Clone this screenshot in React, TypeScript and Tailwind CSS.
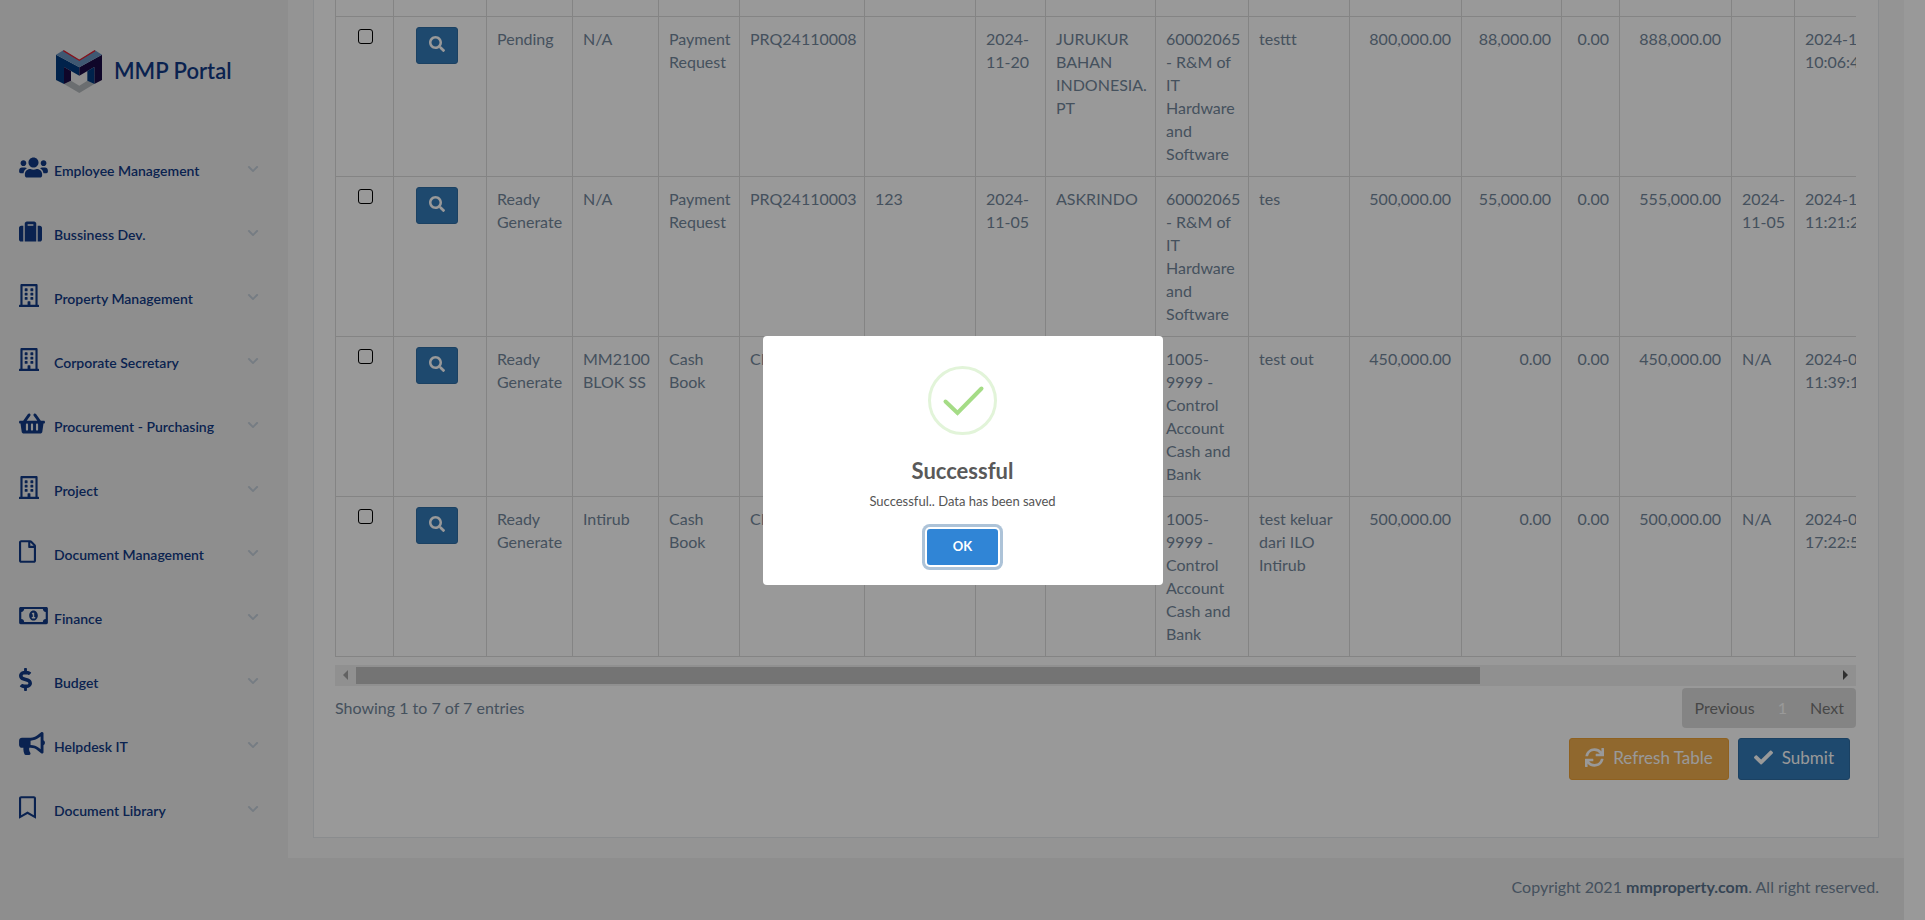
import type { ComponentType, ReactNode } from 'react';
import {
  FaUsers,
  FaSuitcase,
  FaRegBuilding,
  FaShoppingBasket,
  FaRegFile,
  FaRegMoneyBillAlt,
  FaDollarSign,
  FaBullhorn,
  FaRegBookmark,
  FaChevronDown,
  FaSearch,
  FaSync,
  FaCheck,
} from 'react-icons/fa';

type MenuItem = { label: string; icon: ComponentType<{ className?: string }>; size: string };

const menu: MenuItem[] = [
  { label: 'Employee Management', icon: FaUsers, size: 'w-[29px]' },
  { label: 'Bussiness Dev.', icon: FaSuitcase, size: 'w-[23px]' },
  { label: 'Property Management', icon: FaRegBuilding, size: 'w-5' },
  { label: 'Corporate Secretary', icon: FaRegBuilding, size: 'w-5' },
  { label: 'Procurement - Purchasing', icon: FaShoppingBasket, size: 'w-[26px]' },
  { label: 'Project', icon: FaRegBuilding, size: 'w-5' },
  { label: 'Document Management', icon: FaRegFile, size: 'w-[17px]' },
  { label: 'Finance', icon: FaRegMoneyBillAlt, size: 'w-[29px]' },
  { label: 'Budget', icon: FaDollarSign, size: 'w-[13px]' },
  { label: 'Helpdesk IT', icon: FaBullhorn, size: 'w-[26px]' },
  { label: 'Document Library', icon: FaRegBookmark, size: 'w-[17px]' },
];

type Row = {
  status: string;
  company: string;
  type: string;
  number: string;
  invoice: string;
  date: string;
  vendor: string;
  account: string;
  note: string;
  amount: string;
  vat: string;
  tax: string;
  total: string;
  due: string;
  created: string;
};

const rows: Row[] = [
  { status: 'Pending', company: 'N/A', type: 'Payment Request', number: 'PRQ24110008', invoice: '', date: '2024-11-20', vendor: 'JURUKUR BAHAN INDONESIA. PT', account: '60002065 - R&M of IT Hardware and Software', note: 'testtt', amount: '800,000.00', vat: '88,000.00', tax: '0.00', total: '888,000.00', due: '', created: '2024-11-20 10:06:41' },
  { status: 'Ready Generate', company: 'N/A', type: 'Payment Request', number: 'PRQ24110003', invoice: '123', date: '2024-11-05', vendor: 'ASKRINDO', account: '60002065 - R&M of IT Hardware and Software', note: 'tes', amount: '500,000.00', vat: '55,000.00', tax: '0.00', total: '555,000.00', due: '2024-11-05', created: '2024-11-05 11:21:20' },
  { status: 'Ready Generate', company: 'MM2100 BLOK SS', type: 'Cash Book', number: 'CB24090002', invoice: '', date: '2024-09-10', vendor: '', account: '1005-9999 - Control Account Cash and Bank', note: 'test out', amount: '450,000.00', vat: '0.00', tax: '0.00', total: '450,000.00', due: 'N/A', created: '2024-09-10 11:39:10' },
  { status: 'Ready Generate', company: 'Intirub', type: 'Cash Book', number: 'CB24090001', invoice: '', date: '2024-09-09', vendor: '', account: '1005-9999 - Control Account Cash and Bank', note: 'test keluar dari ILO Intirub', amount: '500,000.00', vat: '0.00', tax: '0.00', total: '500,000.00', due: 'N/A', created: '2024-09-09 17:22:50' },
];

const columnWidths = [58, 93, 86, 86, 81, 125, 111, 70, 110, 93, 101, 112, 100, 58, 112, 63, 120, 424];

function Logo() {
  return (
    <svg viewBox="0 0 138 129" className="h-[43px] w-[46px]" aria-hidden="true">
      <path d="M24 102 45 92 70 107 94 92 115 102 70 129Z" fill="#b3b8bb" />
      <path d="M0 14 70 52V77L24 51V102L0 90Z" fill="#003a7d" />
      <path d="M24 51 45 63V92L24 102Z" fill="#1a0a45" />
      <path d="M138 14 70 52V77L115 51V102L138 90Z" fill="#1a0a45" />
      <path d="M115 51 94 63V92L115 102Z" fill="#003a7d" />
      <path d="M0 14 22 1 70 31 117 1 138 14 70 52Z" fill="#6a93bf" />
      <path d="M22 2 70 31 117 2" fill="none" stroke="#e02030" strokeWidth="4" />
    </svg>
  );
}

function Sidebar() {
  return (
    <aside className="w-72 shrink-0 bg-[#ededed] text-[#113a85]">
      <a href="#home" className="flex h-[135px] items-center gap-3 pl-14 pt-2 text-[22px]">
        <Logo />
        <span className="pb-[2px] font-semibold">MMP Portal</span>
      </a>
      <nav aria-label="Main menu">
        <ul>
          {menu.map(({ label, icon: Icon, size }) => (
            <li key={label}>
              <a href="#menu" className="flex h-16 items-center pl-[19px] pr-[29px]">
                <span className="flex w-[35px] shrink-0">
                  <Icon className={`h-[23px] ${size}`} />
                </span>
                <span className="flex-1 whitespace-nowrap pt-2 text-sm font-semibold leading-5">{label}</span>
                <FaChevronDown className="mt-1 h-3 w-3 text-[#c4cfda]" />
              </a>
            </li>
          ))}
        </ul>
      </nav>
    </aside>
  );
}

function Cell({ children, numeric = false }: { children?: ReactNode; numeric?: boolean }) {
  return (
    <td className={`border border-[#ddd] py-[10px] pl-[10px] align-top ${numeric ? 'pr-[10px] text-right' : 'pr-[8px]'}`}>
      {children}
    </td>
  );
}

function EntriesTable() {
  return (
    <div className="overflow-x-hidden">
      <table className="w-[2003px] table-fixed border-collapse text-base leading-[23px]">
        <colgroup>
          {columnWidths.map((width, i) => (
            <col key={i} style={{ width }} />
          ))}
        </colgroup>
        <tbody>
          <tr className="h-4">
            {columnWidths.map((_, i) => (
              <td key={i} className="border border-t-0 border-[#ddd]" />
            ))}
          </tr>
          {rows.map((row) => (
            <tr key={row.number} className="h-40">
              <Cell>
                <input
                  type="checkbox"
                  aria-label={`Select ${row.number}`}
                  className="mx-auto mt-[2px] block size-[15px] appearance-none rounded-[3px] border border-black"
                />
              </Cell>
              <Cell>
                <button
                  type="button"
                  aria-label={`View ${row.number}`}
                  className="ml-3 flex h-[37px] w-[42px] items-center justify-center rounded-[3px] border border-[#2e6da4] bg-[#337ab7] pb-[2px] text-white"
                >
                  <FaSearch className="size-4" />
                </button>
              </Cell>
              <Cell>{row.status}</Cell>
              <Cell>{row.company}</Cell>
              <Cell>{row.type}</Cell>
              <Cell>{row.number}</Cell>
              <Cell>{row.invoice}</Cell>
              <Cell>{row.date}</Cell>
              <Cell>{row.vendor}</Cell>
              <Cell>{row.account}</Cell>
              <Cell>{row.note}</Cell>
              <Cell numeric>{row.amount}</Cell>
              <Cell numeric>{row.vat}</Cell>
              <Cell numeric>{row.tax}</Cell>
              <Cell numeric>{row.total}</Cell>
              <Cell>{row.due}</Cell>
              <Cell>{row.created}</Cell>
              <Cell />
            </tr>
          ))}
        </tbody>
      </table>
    </div>
  );
}

function ScrollTrack() {
  return (
    <div className="mt-2 flex h-[21px] items-center bg-[#f1f1f1]">
      <button type="button" aria-label="Scroll left" className="flex w-[21px] justify-center">
        <svg viewBox="0 0 5 10" className="h-[10px] w-[5px]" aria-hidden="true">
          <path d="M5 0V10L0 5Z" fill="#a3a3a3" />
        </svg>
      </button>
      <div className="flex-1">
        <div className="h-[17px] w-[76%] bg-[#c1c1c1]" />
      </div>
      <button type="button" aria-label="Scroll right" className="flex w-[21px] justify-center">
        <svg viewBox="0 0 5 10" className="h-[10px] w-[5px]" aria-hidden="true">
          <path d="M0 0V10L5 5Z" fill="#505050" />
        </svg>
      </button>
    </div>
  );
}

function SuccessDialog() {
  return (
    <div className="fixed inset-0 flex items-center justify-center bg-black/40">
      <div
        role="dialog"
        aria-modal="true"
        aria-labelledby="dialog-title"
        className="flex w-[400px] flex-col items-center rounded bg-white pb-5 pt-[30px] text-[#545454]"
      >
        <svg viewBox="0 0 69 69" className="size-[69px]" fill="none" aria-hidden="true">
          <circle cx="34.5" cy="34.5" r="33" stroke="#e2f4d9" strokeWidth="3" />
          <path d="M17.5 35.5 29.5 47 53.5 22.5" stroke="#a5dc86" strokeWidth="4" strokeLinecap="round" />
        </svg>
        <h2 id="dialog-title" className="mt-5 text-[22px] font-bold leading-8 text-[#595959]">
          Successful
        </h2>
        <p className="mt-1 text-[13px] leading-5">Successful.. Data has been saved</p>
        <button
          type="button"
          className="mt-[18px] h-9 w-[71px] rounded-[3px] bg-[#3085d6] text-[13px] font-bold text-white ring-3 ring-[#adc3d8] ring-offset-2 ring-offset-white"
        >
          OK
        </button>
      </div>
    </div>
  );
}

export default function App() {
  return (
    <div className="flex min-h-screen bg-white pr-[21px] font-[Lato,sans-serif] text-base text-[#73879c]">
      <Sidebar />
      <div className="flex min-w-0 flex-1 flex-col bg-[#f7f7f7]">
        <main className="px-[25px] pb-5">
          <section className="border border-t-0 border-[#e6e9ed] bg-white pb-[57px] pl-[21px] pr-[22px]">
            <EntriesTable />
            <ScrollTrack />
            <div className="mt-[2px] flex items-start justify-between">
              <p className="pt-2 leading-6">Showing 1 to 7 of 7 entries</p>
              <div className="flex h-10 items-center rounded bg-[#ddd] text-[#777]">
                <button type="button" className="px-3">Previous</button>
                <button type="button" className="px-[11px] text-white">1</button>
                <button type="button" className="px-3">Next</button>
              </div>
            </div>
            <div className="mr-[6px] mt-[10px] flex justify-end gap-[9px] text-[17px] text-white">
              <button type="button" className="flex h-[42px] items-center gap-[9px] rounded-[3px] border border-[#eea236] bg-[#f0ad4e] px-[15px] pb-[2px]">
                <FaSync className="size-[19px]" />
                Refresh Table
              </button>
              <button type="button" className="flex h-[42px] items-center gap-[9px] rounded-[3px] border border-[#2e6da4] bg-[#337ab7] px-[15px] pb-[2px]">
                <FaCheck className="size-[19px]" />
                Submit
              </button>
            </div>
          </section>
        </main>
        <footer className="flex flex-1 items-center justify-end bg-[#ededed] px-[25px] pb-[3px]">
          <p>
            Copyright 2021{' '}
            <a href="#mmproperty" className="font-bold text-[#5a738e]">mmproperty.com</a>. All right reserved.
          </p>
        </footer>
      </div>
      <SuccessDialog />
    </div>
  );
}
